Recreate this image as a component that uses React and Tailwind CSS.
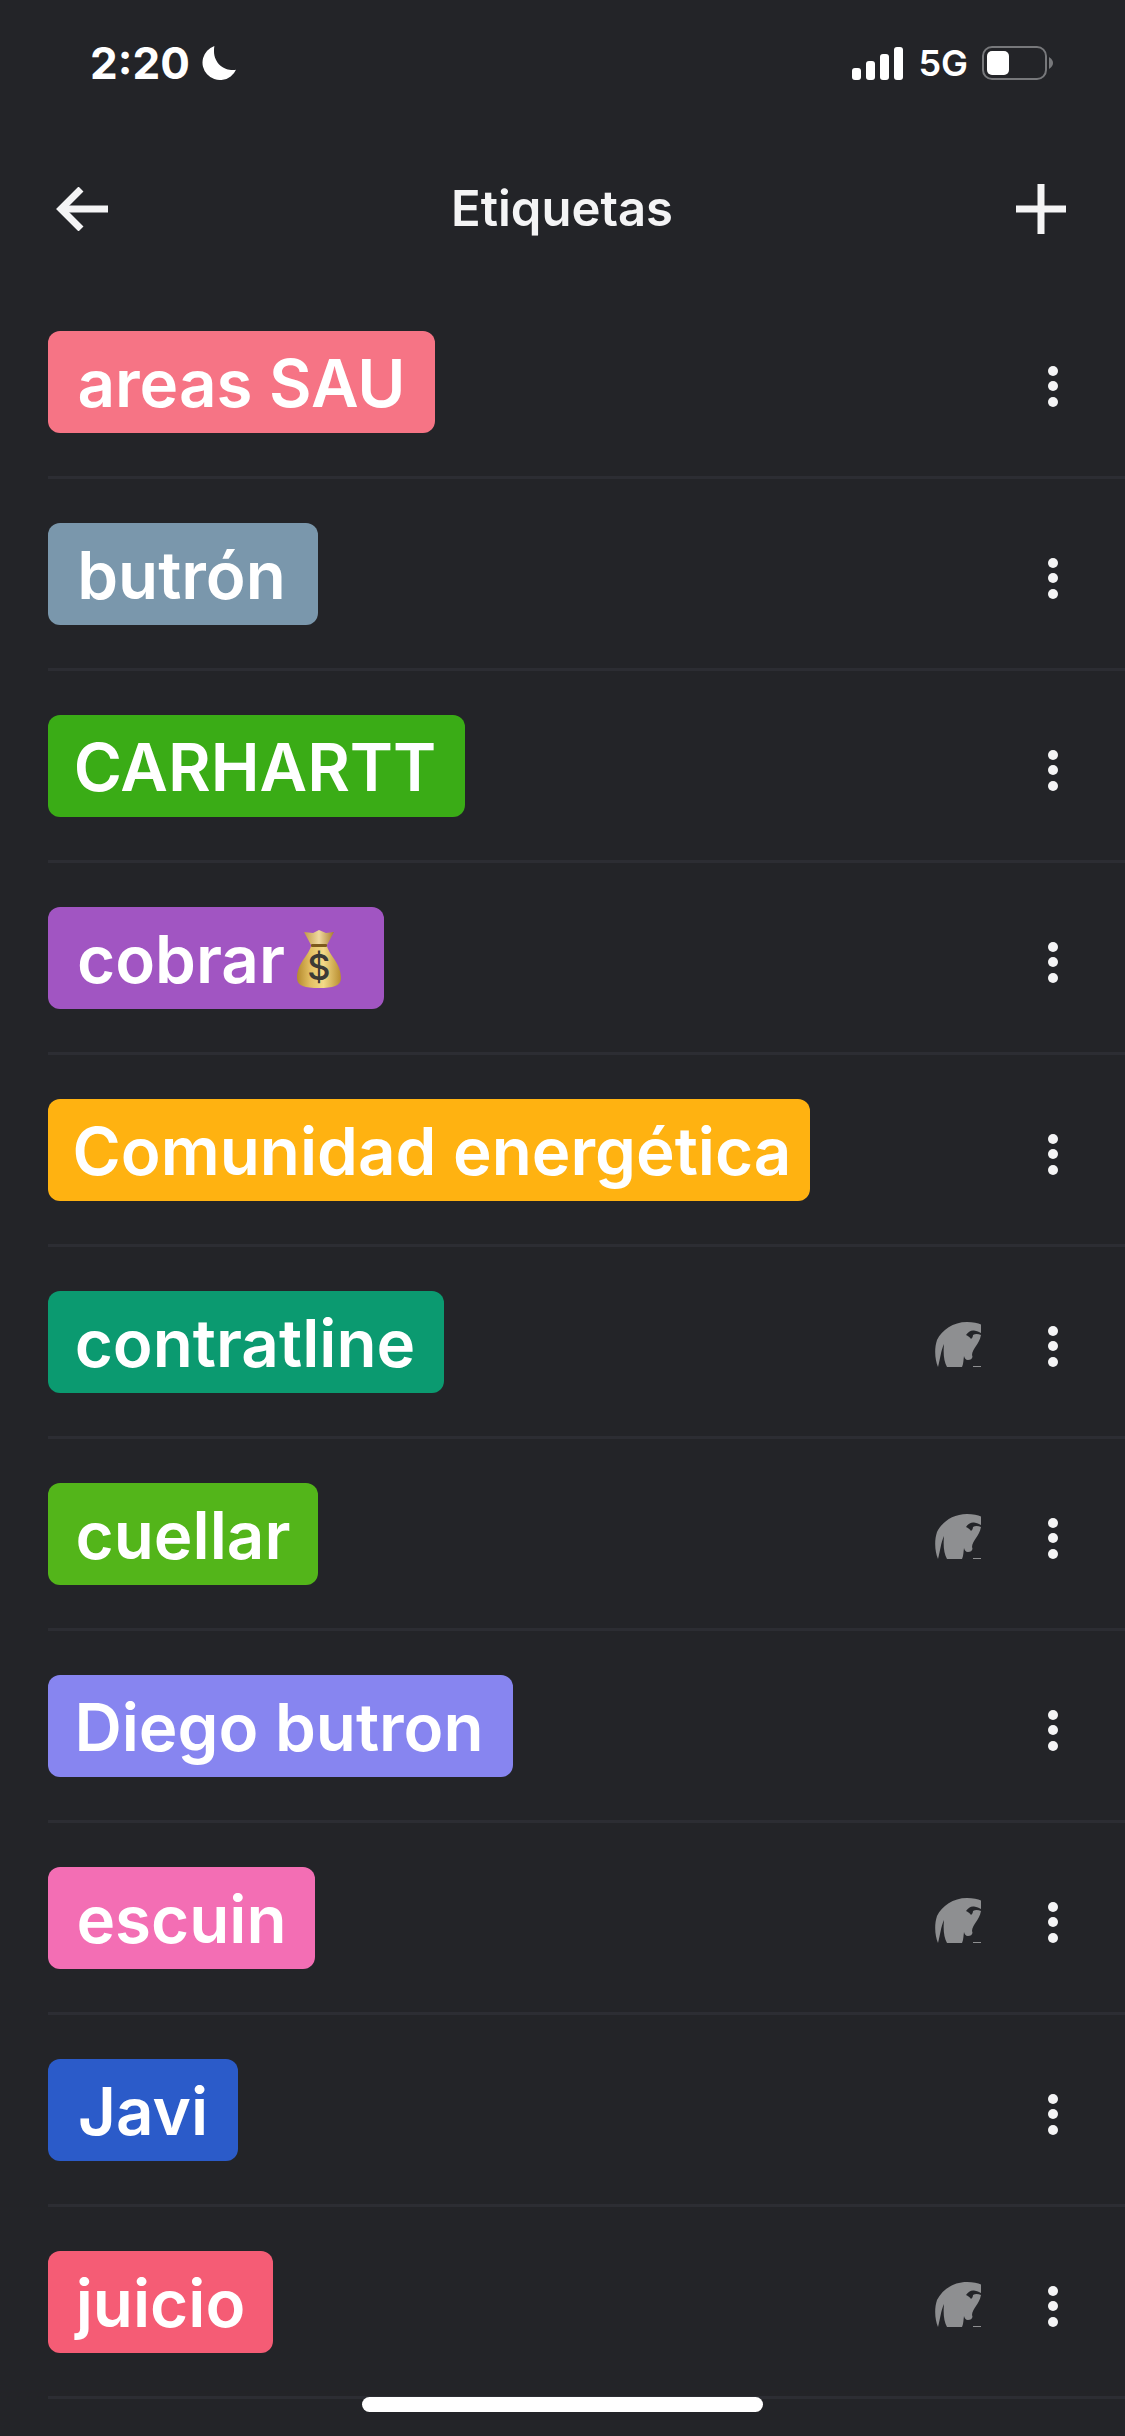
const TAGS = [
  { name: "areas SAU", bg: "bg-[#f67485]", width: "w-[387px]" },
  { name: "butrón", bg: "bg-[#7a97ac]", width: "w-[270px] pr-[3px]" },
  { name: "CARHARTT", bg: "bg-[#3aac16]", width: "w-[417px] pr-[3px]" },
  { name: "cobrar", bg: "bg-[#a155c2]", width: "w-[336px]", bag: true },
  { name: "Comunidad energética", bg: "bg-[#ffb211]", width: "w-[762px] pl-[6px]" },
  { name: "contratline", bg: "bg-[#0b9a70]", width: "w-[396px] pr-[2px]", shared: true },
  { name: "cuellar", bg: "bg-[#53b51a]", width: "w-[270px]", shared: true },
  { name: "Diego butron", bg: "bg-[#8785f0]", width: "w-[465px] pr-[3px]" },
  { name: "escuin", bg: "bg-[#f36eb4]", width: "w-[267px]", shared: true },
  { name: "Javi", bg: "bg-[#2b5bc9]", width: "w-[190px]" },
  { name: "juicio", bg: "bg-[#f55c75]", width: "w-[225px]", shared: true },
];

const MoneyBag = () => (
  <svg className="w-[44px] h-[58px] ml-[12px] mr-[14px] mt-[2px]" viewBox="0 0 44 58">
    <defs>
      <linearGradient id="bagBody" x1="0" x2="1" y1="0" y2="0">
        <stop offset="0" stopColor="#b58a2e" />
        <stop offset="0.3" stopColor="#e3bf62" />
        <stop offset="0.6" stopColor="#f3da88" />
        <stop offset="1" stopColor="#b98e30" />
      </linearGradient>
      <linearGradient id="bagTop" x1="0" x2="1" y1="0" y2="0">
        <stop offset="0" stopColor="#c29a45" />
        <stop offset="0.5" stopColor="#efd9a0" />
        <stop offset="1" stopColor="#a87c2c" />
      </linearGradient>
    </defs>
    <path d="M7 2 L16 3 L22 0 L29 3 L37 2 L30 15 L14 15 Z" fill="url(#bagTop)" />
    <path d="M14 16 L30 16 C32 25 44 33 44 48 C44 56 36 58 22 58 C8 58 0 56 0 48 C0 33 12 25 14 16 Z" fill="url(#bagBody)" />
    <rect x="14" y="14" width="16" height="3" rx="1" fill="#7c5a1c" />
    <text x="22" y="50" textAnchor="middle" fontSize="36" fontWeight="500" fill="#3b3a36" fontFamily="Inter, sans-serif">$</text>
  </svg>
);

const SharedIcon = () => (
  <svg className="w-[46px] h-[45px] mt-[5px]" viewBox="0 0 46 45" fill="#8e8f91">
    <path d="M3 45 C0 38 -1 27 2 18 C7 8 18 0 32 0 C38 0 43 1 46 2.500 L46 13 C45 18 43 21 41 24 C39 27 37 30 37 33 C38.500 36 36 38 33 38 C30.500 38 29.500 36 29 34 C28.500 37 28.500 42 27 45 L12 45 C9 40 8 32 9 22 C6 28 5 38 3 45 Z" />
    <path d="M31 13 C33 10 36 8 39 8.500 C42 9 44 10 46 11 L46 13 C43 11.500 40 11.500 38 13 C38 15 37 16 36 17 C35 15 33 14 31 13 Z" fill="#232428" />
    <rect x="38" y="44" width="8" height="1" />
  </svg>
);

const Dots = () => (
  <div className="flex flex-col gap-[5.500px] mt-[8px]">
    <span className="w-[10px] h-[10px] rounded-full bg-[#f4f4f5]" />
    <span className="w-[10px] h-[10px] rounded-full bg-[#f4f4f5]" />
    <span className="w-[10px] h-[10px] rounded-full bg-[#f4f4f5]" />
  </div>
);

const TagRow = ({ tag }) => (
  <div className="h-[192px] ml-[48px] pt-[1px] pr-[67px] flex items-center border-b-[3px] border-[#2c2d33]">
    <div className={`h-[102px] rounded-[12px] flex items-center justify-center ${tag.bg} ${tag.width}`}>
      <span className="mt-[3px] text-[65.5px] leading-none font-semibold text-white">{tag.name}</span>
      {tag.bag && <MoneyBag />}
    </div>
    <div className="ml-auto flex items-center gap-[67px]">
      {tag.shared && <SharedIcon />}
      <Dots />
    </div>
  </div>
);

export default function App() {
  return (
    <div className="relative w-[1125px] h-[2436px] overflow-hidden bg-[#232428] font-['Inter',sans-serif] text-white">
      {/* Status bar */}
      <div className="h-[110px] pt-[16px] pl-[90px] pr-[72px] flex items-center justify-between">
        <div className="flex items-center gap-[12px]">
          <span className="text-[44px] leading-none font-bold">2:20</span>
          <svg className="w-[34px] h-[35px]" viewBox="0 0 33 34" fill="white">
            <path d="M12 0 A17 17 0 1 0 33 23 C24 25 9 18 12 0 Z" />
          </svg>
        </div>
        <div className="flex items-center">
          <svg className="w-[51px] h-[33px]" viewBox="0 0 51 33" fill="white">
            <rect x="0" y="21" width="9" height="12" rx="3" />
            <rect x="14" y="14" width="9" height="19" rx="3" />
            <rect x="28" y="7" width="9" height="26" rx="3" />
            <rect x="42" y="0" width="9" height="33" rx="3" />
          </svg>
          <span className="ml-[15px] text-[36px] leading-none font-semibold">5G</span>
          <div className="ml-[14px] w-[65px] h-[34px] rounded-[10px] border-[2px] border-[#77787b] p-[3px]">
            <div className="w-[22px] h-[24px] rounded-[5px] bg-white" />
          </div>
          <svg className="ml-[2px] w-[4px] h-[12px]" viewBox="0 0 4 12" fill="#77787b">
            <path d="M0 0 C3 2 4 4 4 6 C4 8 3 10 0 12 Z" />
          </svg>
        </div>
      </div>

      {/* Header */}
      <div className="h-[177px] pl-[56px] pr-[59px] pt-[20px] flex items-center justify-between">
        <svg className="w-[52px] h-[44px]" viewBox="0 0 52 44" fill="none" stroke="#f4f4f5" strokeWidth="7">
          <path d="M25 2 L5 22 L25 42" />
          <path d="M5 22 H52" />
        </svg>
        <span className="text-[49px] leading-none font-semibold text-[#f4f4f5]">Etiquetas</span>
        <svg className="w-[50px] h-[50px]" viewBox="0 0 50 50" fill="none" stroke="#f4f4f5" strokeWidth="7">
          <path d="M25 0 V50" />
          <path d="M0 25 H50" />
        </svg>
      </div>

      {/* Tag list */}
      <div>
        {TAGS.map((tag) => (
          <TagRow key={tag.name} tag={tag} />
        ))}
      </div>

      {/* Home indicator */}
      <div className="absolute left-[362px] top-[2397px] w-[401px] h-[15px] rounded-full bg-white" />
    </div>
  );
}
